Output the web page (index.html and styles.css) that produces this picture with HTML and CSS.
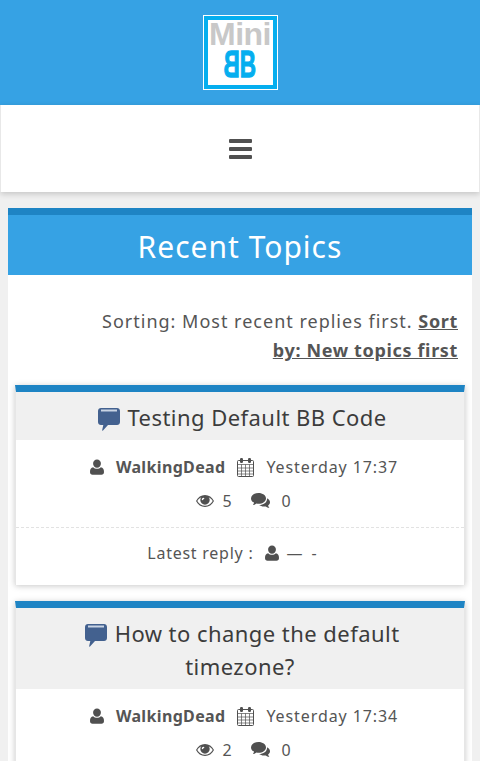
FILE: index.html
```html
<!DOCTYPE html>
<html lang="en">
<head>
	<meta charset="UTF-8">
	<meta name="viewport" content="width=device-width, initial-scale=1.0">
	<title>Recent Topics</title>
	<link rel="stylesheet" href="styles.css">
</head>
<body>
	<svg class="defs" width="0" height="0" aria-hidden="true">
		<symbol id="i-user" viewBox="0 0 14 16"><path d="M7 .5a3.900 3.900 0 0 1 3.900 4.100A3.900 3.900 0 0 1 7 8.700a3.900 3.900 0 0 1-3.900-4.100A3.900 3.900 0 0 1 7 .5zM3.200 8.300C4.200 9.300 5.500 9.800 7 9.800s2.800-.5 3.800-1.500c2.200.2 3.200 1.900 3.200 4.800 0 1.700-1 2.700-2.500 2.700h-9C1 15.800 0 14.800 0 13.100c0-2.900 1-4.600 3.200-4.800z"/></symbol>
		<symbol id="i-cal" viewBox="0 0 17 19">
			<rect x=".5" y="2.500" width="16" height="16" rx="1" fill="none" stroke="#505050"/>
			<path d="M1 6.500h15M1 10h15M1 13h15M1 16h15M4.500 6.500v12M8.500 6.500v12M12.500 6.500v12" fill="none" stroke="#505050" stroke-width=".7"/>
			<rect x="3" y="0" width="3" height="5" rx="1.200"/>
			<rect x="11" y="0" width="3" height="5" rx="1.200"/>
		</symbol>
		<symbol id="i-eye" viewBox="0 0 18 12"><path fill-rule="evenodd" d="M9 0c3.900 0 7 2.300 9 6-2 3.700-5.100 6-9 6s-7-2.300-9-6c2-3.700 5.100-6 9-6zM1.300 6C3 8.900 5.700 10.800 9 10.800s6-1.900 7.700-4.800c-1-1.700-2.400-3-4-3.800.6.700 1 1.700 1 2.800a4.700 4.700 0 0 1-9.400 0c0-1.100.4-2.100 1-2.800-1.600.8-3 2.100-4 3.800zM7.600 2.800c-1 0-1.800.8-1.800 1.800 0 .4.300.7.700.7s.7-.3.700-.7c0-.2.200-.4.400-.4.400 0 .7-.3.700-.7s-.3-.7-.7-.7z"/></symbol>
		<symbol id="i-chat" viewBox="0 0 19 16"><path d="M7.500 0C11.600 0 15 2.400 15 5.400s-3.400 5.400-7.500 5.400c-.7 0-1.400-.1-2-.2-1 .8-2.200 1.300-3.600 1.500.6-.8 1-1.600 1.200-2.500C1.200 8.700 0 7.200 0 5.400 0 2.400 3.400 0 7.500 0zM16 5.200c1.800.9 3 2.400 3 4 0 1.300-.7 2.400-1.900 3.300.2.900.7 1.700 1.300 2.500-1.500-.2-2.700-.7-3.700-1.600-.6.100-1.200.2-1.800.2-1.900 0-3.600-.6-4.800-1.500 4.300 0 8-2.500 8-6.300 0-.2 0-.4-.1-.6z"/></symbol>
		<symbol id="i-bubble" viewBox="0 0 22 23">
			<path fill="#43618f" d="M3 0h16c1.700 0 3 1.300 3 3v11c0 1.700-1.300 3-3 3H10l-5 5.500c-.5.500-1 .2-.8-.4L5.300 17H3c-1.700 0-3-1.300-3-3V3c0-1.700 1.300-3 3-3z"/>
			<path fill="#c9d4e4" d="M3 1.500h16v2H3z"/>
		</symbol>
	</svg>

	<header class="top">
		<a class="logo" href="#">
			<span class="logo-mini">Mini</span>
			<span class="logo-bb"><span class="flip">B</span><span>B</span></span>
		</a>
	</header>

	<nav class="menu">
		<span class="burger"><i></i><i></i><i></i></span>
	</nav>

	<main class="box">
		<h1 class="box-title">Recent Topics</h1>
		<p class="sorting">Sorting: Most recent replies first. <a href="#">Sort by: New topics first</a></p>

		<article class="topic">
			<h2 class="topic-title"><svg class="bubble"><use href="#i-bubble"/></svg> Testing Default BB Code</h2>
			<div class="meta">
				<div class="meta-row">
					<svg class="ic ic-user"><use href="#i-user"/></svg>
					<b>WalkingDead</b>
					<svg class="ic ic-cal"><use href="#i-cal"/></svg>
					<span>Yesterday 17:37</span>
				</div>
				<div class="meta-row">
					<svg class="ic ic-eye"><use href="#i-eye"/></svg>
					<span>5</span>
					<svg class="ic ic-chat"><use href="#i-chat"/></svg>
					<span>0</span>
				</div>
			</div>
			<div class="latest">
				<span>Latest reply :</span>
				<svg class="ic ic-user"><use href="#i-user"/></svg>
				<span class="nobody">— -</span>
			</div>
		</article>

		<article class="topic">
			<h2 class="topic-title"><svg class="bubble"><use href="#i-bubble"/></svg> How to change the default timezone?</h2>
			<div class="meta">
				<div class="meta-row">
					<svg class="ic ic-user"><use href="#i-user"/></svg>
					<b>WalkingDead</b>
					<svg class="ic ic-cal"><use href="#i-cal"/></svg>
					<span>Yesterday 17:34</span>
				</div>
				<div class="meta-row">
					<svg class="ic ic-eye"><use href="#i-eye"/></svg>
					<span>2</span>
					<svg class="ic ic-chat"><use href="#i-chat"/></svg>
					<span>0</span>
				</div>
			</div>
		</article>
	</main>
</body>
</html>
```
FILE: styles.css
```css
* {
	margin: 0;
	padding: 0;
	box-sizing: border-box;
}

html, body {
	height: 761px;
	overflow: hidden;
}

body {
	background-color: #f0f0f0;
	font-family: "Noto Sans", "Open Sans", sans-serif;
	color: #555;
}

a {
	color: inherit;
}

.defs {
	position: absolute;
}

.top {
	display: flex;
	justify-content: center;
	align-items: center;
	height: 105px;
	background-color: #36a2e4;
}

.logo {
	display: flex;
	flex-direction: column;
	align-items: center;
	width: 75px;
	height: 75px;
	padding-top: 5px;
	background-color: #fff;
	border: 1px solid #fff;
	box-shadow: inset 0 0 0 4px #05aeef;
	text-decoration: none;
	overflow: hidden;
}

.logo-mini {
	font: 700 32px/26px "Liberation Sans", sans-serif;
	color: #c8c8c8;
	letter-spacing: -.5px;
}

.logo-bb {
	display: flex;
	margin-top: 4px;
	font: 700 30px/26px "Liberation Sans", sans-serif;
	color: #05aeef;
	-webkit-text-stroke: 1px #05aeef;
	transform: scale(.75, 1.25);
}

.flip {
	display: inline-block;
	transform: scaleX(-1);
}

.menu {
	display: flex;
	justify-content: center;
	align-items: center;
	height: 87px;
	background-color: #fff;
	border-left: 1px solid #e8e8e8;
	border-right: 1px solid #e8e8e8;
	box-shadow: 0 2px 6px rgba(0, 0, 0, 0.18);
}

.burger {
	display: flex;
	flex-direction: column;
	gap: 4px;
	width: 23px;
}

.burger i {
	display: block;
	height: 4px;
	border-radius: 1px;
	background-color: #505050;
}

.box {
	margin: 16px 8px 0;
	padding-bottom: 16px;
	background-color: #fff;
	border-top: 7px solid #1e84c4;
}

.box-title {
	height: 60px;
	padding-top: 4px;
	background-color: #36a2e4;
	color: #fff;
	font-size: 30px;
	font-weight: 400;
	letter-spacing: 1px;
	line-height: 56px;
	text-align: center;
}

.sorting {
	padding: 32px 14px 20px 80px;
	font-size: 18px;
	letter-spacing: 1px;
	line-height: 29px;
	text-align: right;
}

.sorting a {
	font-weight: 700;
	letter-spacing: .65px;
}

.topic {
	margin: 0 7px 16px;
	background-color: #fff;
	border-top: 7px solid #1e84c4;
	border-left: 1px solid #e6e6e6;
	border-right: 1px solid #e6e6e6;
	box-shadow: 0 1px 6px rgba(0, 0, 0, 0.22);
}

.topic-title {
	padding: 9px 24px 6px;
	background-color: #f0f0f0;
	color: #3c3c3c;
	font-size: 22px;
	font-weight: 400;
	letter-spacing: .45px;
	line-height: 33px;
	text-align: center;
}

.bubble {
	width: 22px;
	height: 23px;
	margin: 0 1px 0 5px;
	vertical-align: -5px;
}

.meta {
	padding: 10px 0 9px;
	border-bottom: 1px dashed #e2e2e2;
}

.meta-row {
	display: flex;
	justify-content: center;
	align-items: center;
	height: 34px;
	padding-left: 8px;
	font-size: 16px;
	letter-spacing: .9px;
}

.meta-row b {
	margin: 0 12px;
	letter-spacing: .35px;
}

.ic {
	fill: #505050;
	flex: none;
}

.ic-user {
	width: 14px;
	height: 16px;
}

.ic-cal {
	width: 17px;
	height: 19px;
	margin-right: 12px;
}

.ic-eye {
	width: 18px;
	height: 12px;
	margin-right: 8px;
}

.ic-chat {
	width: 19px;
	height: 16px;
	margin: 0 12px 0 18px;
}

.latest {
	display: flex;
	justify-content: center;
	align-items: center;
	gap: 12px;
	height: 57px;
	padding: 0 14px 7px 0;
	font-size: 16px;
	letter-spacing: .75px;
}

.nobody {
	margin-left: -5px;
	word-spacing: 1px;
	letter-spacing: 2px;
}
```
